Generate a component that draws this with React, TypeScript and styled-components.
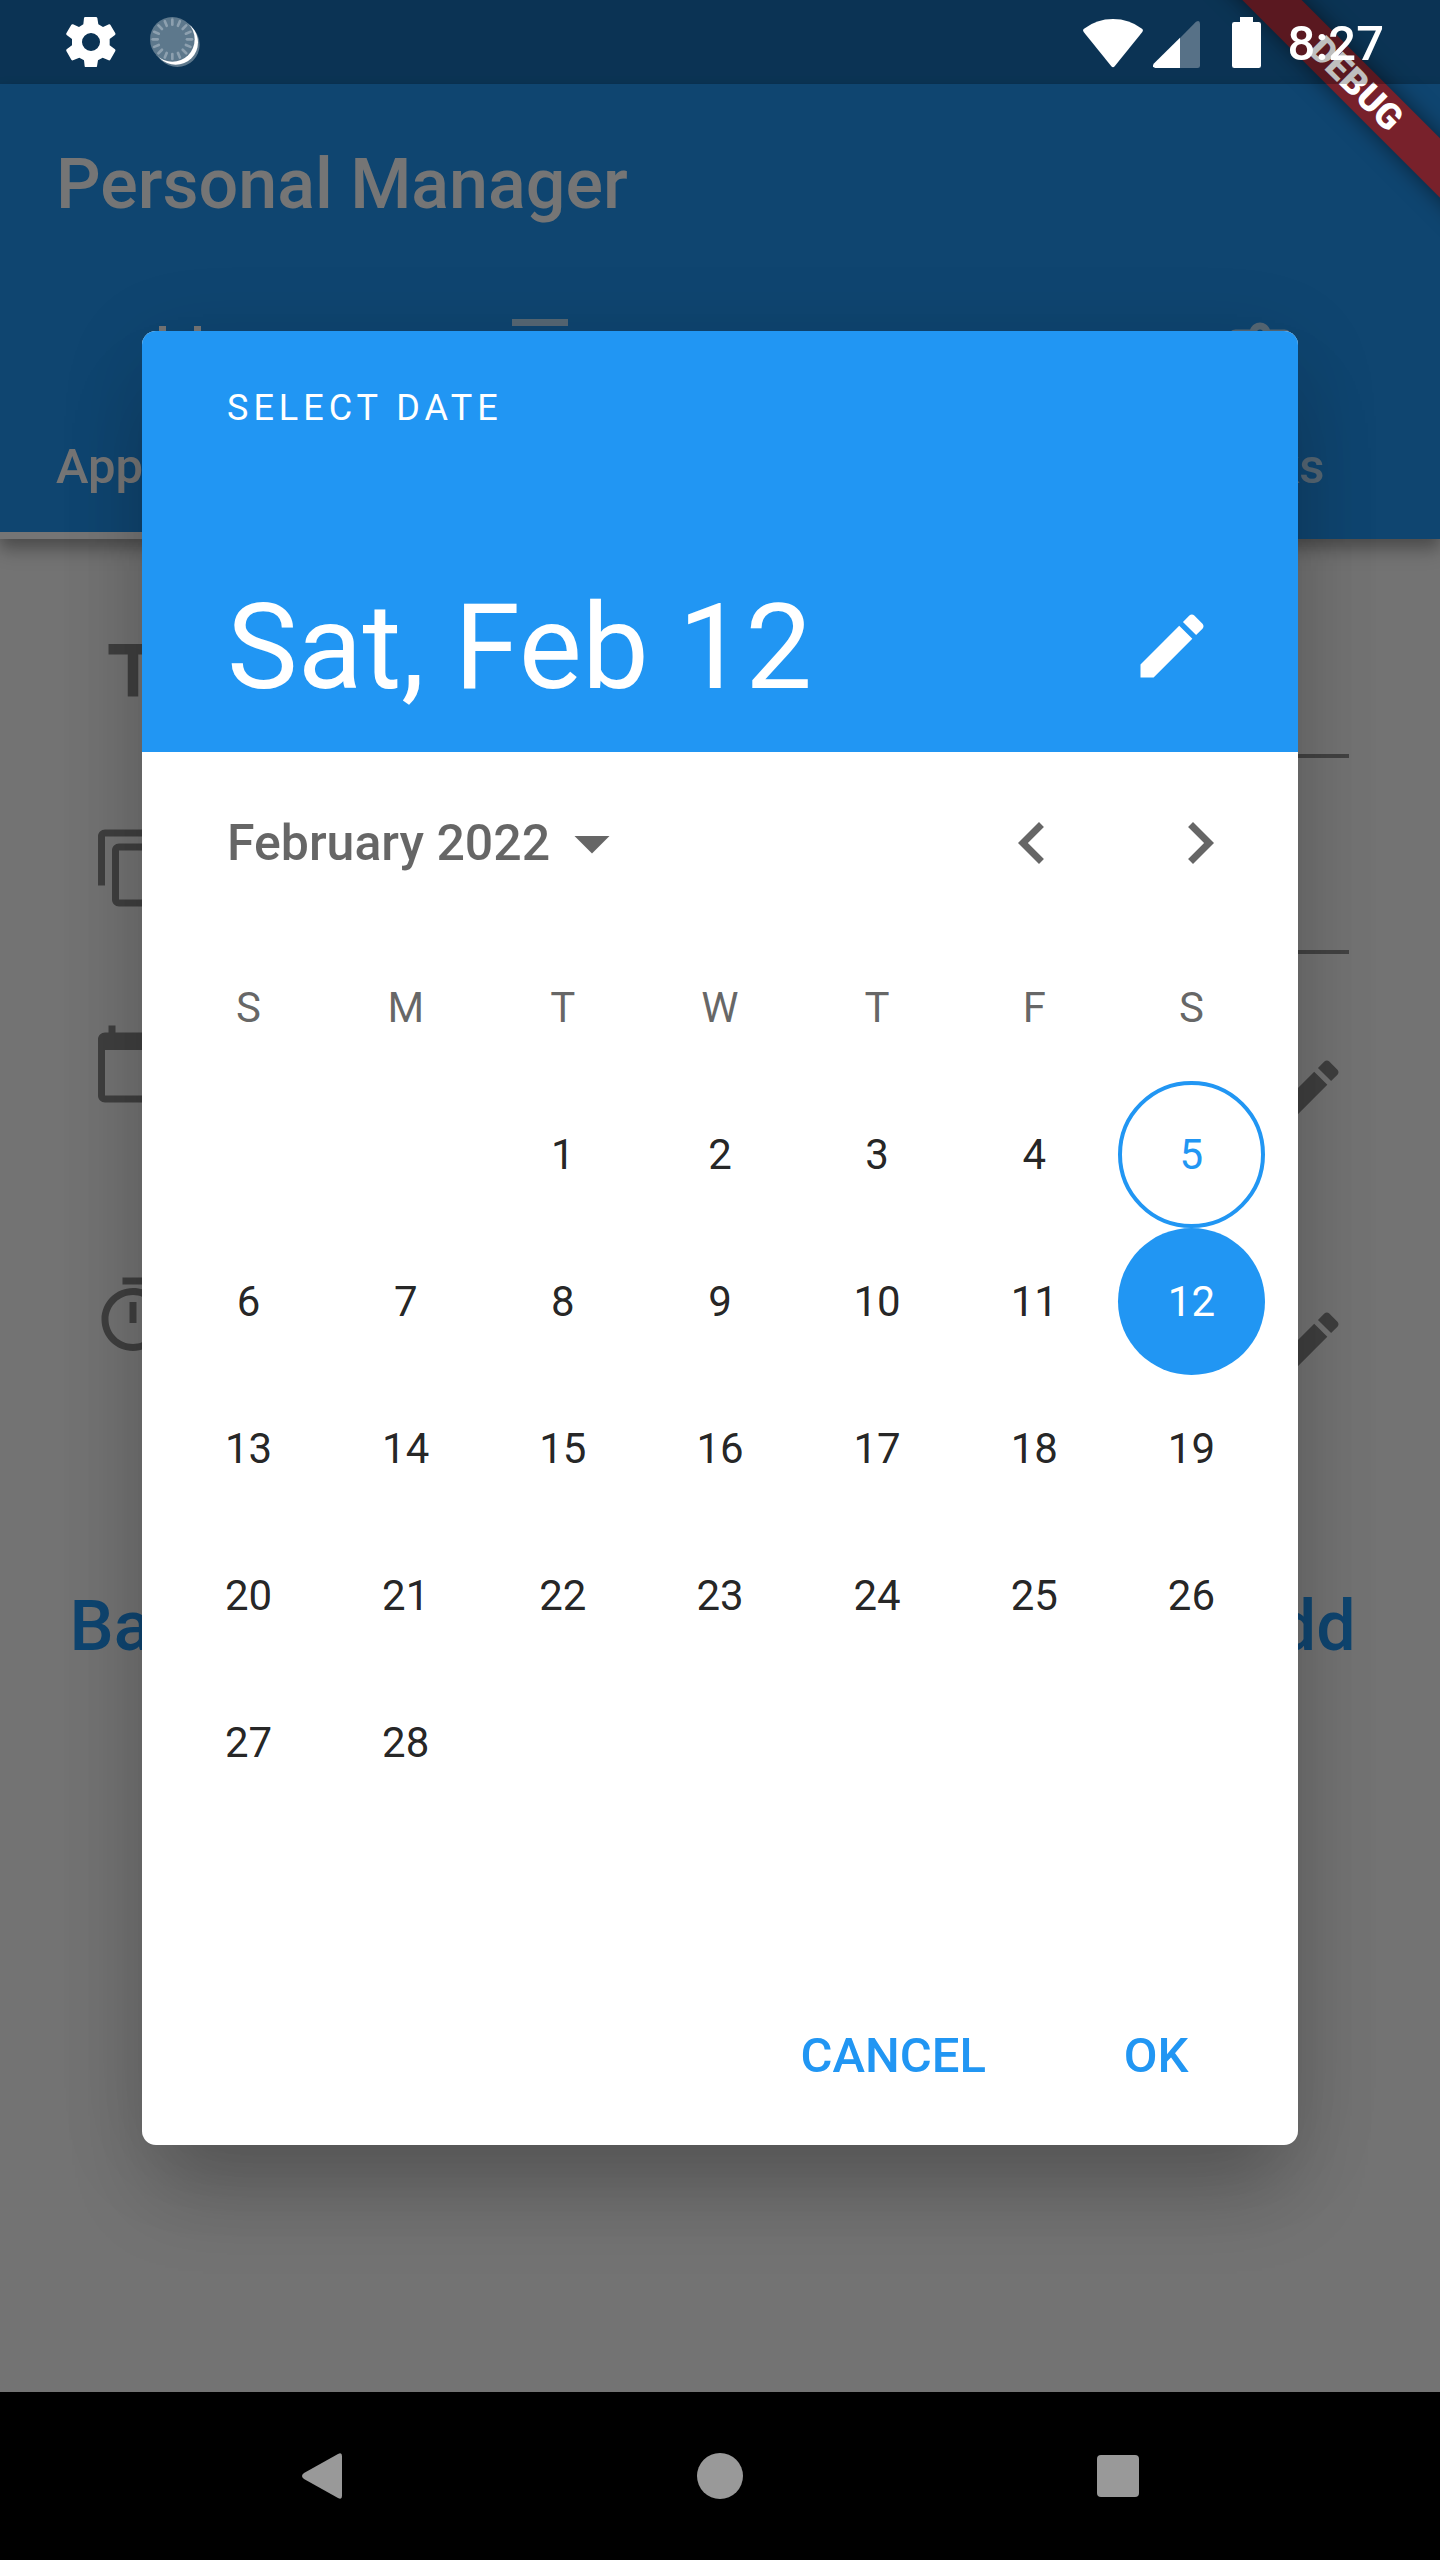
import React, { useState } from "react";
import styled, { createGlobalStyle } from "styled-components";

const BLUE = "#2196f3";
const INK = "rgba(0, 0, 0, 0.87)";
const MUTED = "rgba(0, 0, 0, 0.6)";
const FADED = "rgba(0, 0, 0, 0.45)";

const GlobalStyle = createGlobalStyle`
  *, *::before, *::after { box-sizing: border-box; }
  body {
    margin: 0;
    background: #fafafa;
    font-family: Roboto, "Liberation Sans", sans-serif;
  }
  button {
    margin: 0;
    padding: 0;
    border: 0;
    background: none;
    color: inherit;
    font: inherit;
    cursor: pointer;
  }
  svg { display: block; flex: none; }
`;

const Screen = styled.div`
  position: relative;
  display: flex;
  flex-direction: column;
  min-height: 100vh;
  padding: 84px 0 168px;
  overflow: hidden;
  background: linear-gradient(${BLUE} 84px, #fafafa 84px);
`;

/* ---------- status bar ---------- */

const StatusBar = styled.header`
  position: absolute;
  inset: 0 0 auto;
  z-index: 4;
  display: flex;
  align-items: center;
  justify-content: space-between;
  height: 84px;
  padding: 0 56px 0 66px;
  background: rgba(0, 0, 0, 0.25);
  color: #fff;
`;

const StatusGroup = styled.div<{ $gap: number }>`
  display: flex;
  align-items: center;
  gap: ${(p) => p.$gap}px;
`;

const Signals = styled(StatusGroup)`
  align-items: flex-end;
`;

const Clock = styled.time`
  padding-top: 4px;
  font-size: 49px;
  font-weight: 500;
  line-height: 56px;
`;

/* ---------- app bar ---------- */

const AppBar = styled.div`
  position: relative;
  background: ${BLUE};
  color: #fff;
  box-shadow: 0 7px 14px rgba(0, 0, 0, 0.24), 0 14px 18px rgba(0, 0, 0, 0.14);
`;

const AppTitle = styled.h1`
  margin: 0;
  padding: 4px 56px 0;
  font-size: 70px;
  font-weight: 500;
  line-height: 192px;
`;

const Tabs = styled.nav`
  display: grid;
  grid-template-columns: repeat(4, 1fr);
`;

const Tab = styled.button<{ $active?: boolean }>`
  display: flex;
  flex-direction: column;
  align-items: center;
  gap: 35px;
  min-width: 0;
  padding: 39px 56px 37px;
  border-bottom: 7px solid ${(p) => (p.$active ? "#fff" : "transparent")};
  color: ${(p) => (p.$active ? "#fff" : "rgba(255, 255, 255, 0.7)")};
  font-size: 49px;
  font-weight: 500;
  line-height: 57px;
`;

const TabLabel = styled.span`
  max-width: 100%;
  text-align: left;
  white-space: nowrap;
`;

/* ---------- form behind the dialog ---------- */

const Form = styled.form`
  display: flex;
  flex-direction: column;
  padding: 35px;
  color: ${FADED};
`;

const FieldRow = styled.label`
  display: flex;
  align-items: center;
  gap: 112px;
  height: 196px;
  padding: 0 56px;
`;

const Field = styled.input`
  flex: 1;
  min-width: 0;
  height: 172px;
  padding: 0;
  border: 0;
  border-bottom: 4px solid rgba(0, 0, 0, 0.42);
  background: none;
  color: ${INK};
  font: 400 56px/64px Roboto, sans-serif;
`;

const PickerRow = styled.div`
  display: flex;
  align-items: flex-start;
  justify-content: space-between;
  height: 252px;
  padding: 56px 56px 0;
`;

const PickerEdit = styled.button`
  padding-top: 28px;
`;

const FormActions = styled.div`
  display: flex;
  justify-content: space-between;
  padding-top: 70px;
`;

const FormButton = styled.button`
  min-width: 224px;
  height: 168px;
  padding-top: 4px;
  color: ${BLUE};
  font-size: 70px;
  font-weight: 500;
`;

/* ---------- dialog ---------- */

const Scrim = styled.div`
  position: absolute;
  inset: 0;
  z-index: 2;
  display: flex;
  align-items: center;
  justify-content: center;
  padding: 84px 35px 168px;
  background: rgba(0, 0, 0, 0.54);
`;

const Dialog = styled.section`
  width: 100%;
  max-width: 1156px;
  overflow: hidden;
  border-radius: 14px;
  background: #fff;
  color: ${INK};
  box-shadow: 0 56px 80px -14px rgba(0, 0, 0, 0.22), 0 14px 90px rgba(0, 0, 0, 0.1);
`;

const DialogHeader = styled.div`
  display: flex;
  flex-direction: column;
  justify-content: space-between;
  height: 421px;
  padding: 56px 42px 22px 85px;
  background: ${BLUE};
  color: #fff;
`;

const Overline = styled.p`
  margin: 0;
  font-size: 36px;
  line-height: 42px;
  letter-spacing: 5px;
`;

const DateRow = styled.div`
  display: flex;
  align-items: center;
  justify-content: space-between;
`;

const DateHeadline = styled.h2`
  margin: 0;
  padding-top: 4px;
  font-size: 119px;
  font-weight: 400;
  line-height: 140px;
`;

const IconButton = styled.button`
  display: grid;
  place-items: center;
  width: 168px;
  height: 168px;
`;

const MonthBar = styled.div`
  display: flex;
  align-items: center;
  height: 182px;
  padding: 0 14px 0 85px;
  color: ${MUTED};
`;

const MonthButton = styled.button`
  display: flex;
  align-items: center;
  margin-right: auto;
  font-size: 50px;
  font-weight: 500;
  line-height: 58px;
`;

const Calendar = styled.table`
  width: calc(100% - 56px);
  margin: 0 28px 147px;
  border-collapse: collapse;
  table-layout: fixed;
  font-size: 42px;
  line-height: 49px;
  text-align: center;

  th, td {
    height: 147px;
    padding: 0;
    font-weight: 400;
    vertical-align: middle;
  }
  th { color: ${MUTED}; }
`;

const Day = styled.button<{ $today: boolean; $selected: boolean }>`
  display: block;
  width: 147px;
  height: 147px;
  margin: 0 auto;
  border: ${(p) => (p.$today && !p.$selected ? `4px solid ${BLUE}` : "0")};
  border-radius: 50%;
  background: ${(p) => (p.$selected ? BLUE : "transparent")};
  color: ${(p) => (p.$selected ? "#fff" : p.$today ? BLUE : INK)};
`;

const DialogActions = styled.div`
  display: flex;
  align-items: center;
  justify-content: flex-end;
  gap: 30px;
  height: 182px;
  padding: 0 30px;
`;

const TextButton = styled.button`
  min-width: 224px;
  height: 126px;
  padding: 2px 28px 0;
  color: ${BLUE};
  font-size: 49px;
  font-weight: 500;
`;

/* ---------- debug ribbon ---------- */

const RibbonCorner = styled.div`
  position: absolute;
  top: 0;
  right: 0;
  z-index: 3;
  width: 260px;
  height: 260px;
  overflow: hidden;
  pointer-events: none;
`;

const Ribbon = styled.div`
  position: absolute;
  top: 63px;
  right: -116px;
  width: 400px;
  height: 42px;
  transform: rotate(45deg);
  background: #78212b;
  box-shadow: 0 0 21px rgba(0, 0, 0, 0.5);
  color: #fff;
  font-size: 36px;
  font-weight: 900;
  line-height: 42px;
  text-align: center;
`;

/* ---------- navigation bar ---------- */

const NavBar = styled.footer`
  position: absolute;
  inset: auto 0 0;
  z-index: 4;
  display: grid;
  grid-template-columns: repeat(3, 1fr);
  height: 168px;
  padding: 0 123px;
  background: #000;
  color: #999;
`;

const NavButton = styled.button`
  display: grid;
  place-items: center;
`;

/* ---------- icons ---------- */

const paths = {
  edit: "M3 17.25V21h3.75L17.81 9.94l-3.75-3.75L3 17.25zM20.71 7.04c.39-.39.39-1.02 0-1.41l-2.34-2.34c-.39-.39-1.02-.39-1.41 0l-1.83 1.83 3.75 3.75 1.83-1.83z",
  left: "M15.41 7.41L14 6l-6 6 6 6 1.41-1.41L10.83 12z",
  right: "M10 6L8.59 7.41 13.17 12l-4.58 4.59L10 18l6-6z",
  down: "M7 10l5 5 5-5z",
  dateRange:
    "M9 11H7v2h2v-2zm4 0h-2v2h2v-2zm4 0h-2v2h2v-2zm2-7h-1V2h-2v2H8V2H6v2H5c-1.11 0-1.99.9-1.99 2L3 20c0 1.1.89 2 2 2h14c1.1 0 2-.9 2-2V6c0-1.1-.9-2-2-2zm0 16H5V9h14v11z",
  contacts:
    "M20 0H4v2h16V0zM4 24h16v-2H4v2zM20 4H4c-1.1 0-2 .9-2 2v12c0 1.1.9 2 2 2h16c1.1 0 2-.9 2-2V6c0-1.1-.9-2-2-2zm-8 2.75c1.24 0 2.25 1.01 2.25 2.25s-1.01 2.25-2.25 2.25S9.75 10.24 9.75 9 10.76 6.75 12 6.75zM17 17H7v-1.5c0-1.67 3.33-2.5 5-2.5s5 .83 5 2.5V17z",
  note: "M22 10l-6-6H4c-1.1 0-2 .9-2 2v12.01c0 1.1.9 1.99 2 1.99l16-.01c1.1 0 2-.89 2-1.99v-8zm-7-4.5l5.5 5.5H15V5.5z",
  task: "M19 3h-4.18C14.4 1.84 13.3 1 12 1s-2.4.84-2.82 2H5c-1.1 0-2 .9-2 2v14c0 1.1.9 2 2 2h14c1.1 0 2-.9 2-2V5c0-1.1-.9-2-2-2zm-7 0c.55 0 1 .45 1 1s-.45 1-1 1-1-.45-1-1 .45-1 1-1zm-2 14l-4-4 1.41-1.41L10 14.17l6.59-6.59L18 9l-8 8z",
  title: "M5 4v3h5.5v12h3V7H19V4z",
  copy: "M16 1H4c-1.1 0-2 .9-2 2v14h2V3h12V1zm3 4H8c-1.1 0-2 .9-2 2v14c0 1.1.9 2 2 2h11c1.1 0 2-.9 2-2V7c0-1.1-.9-2-2-2zm0 16H8V7h11v14z",
  today:
    "M20 3h-1V1h-2v2H7V1H5v2H4c-1.1 0-2 .9-2 2v16c0 1.1.9 2 2 2h16c1.1 0 2-.9 2-2V5c0-1.1-.9-2-2-2zm0 18H4V8h16v13z",
  timer:
    "M15 1H9v2h6V1zm-4 13h2V8h-2v6zm8.03-6.61l1.42-1.42c-.43-.51-.9-.99-1.41-1.41l-1.42 1.42C16.07 4.74 14.12 4 12 4c-4.97 0-9 4.03-9 9s4.02 9 9 9 9-4.03 9-9c0-2.12-.74-4.07-1.97-5.61zM12 20c-3.87 0-7-3.13-7-7s3.13-7 7-7 7 3.13 7 7-3.13 7-7 7z",
};

const Icon = ({ name }: { name: keyof typeof paths }) => (
  <svg width="84" height="84" viewBox="0 0 24 24" fill="currentColor" aria-hidden="true">
    <path d={paths[name]} />
  </svg>
);

const GearIcon = () => (
  <svg width="50" height="50" viewBox="198 51 150 150" fill="#fff" aria-hidden="true">
    <path
      fillRule="evenodd"
      d="M258 51h30q3 0 4 3l3 19 14 8 18-8q3-1 4 1l15 26q1 3-1 5l-16 12v19l16 12q2 2 1 5l-15 26q-2 3-5 2l-18-8-14 8-3 18q-1 3-4 3h-29q-3 0-4-3l-2-18-14-8-19 8q-3 1-5-2l-15-26q-1-3 1-5l16-12v-19l-16-12q-2-2-1-5l15-26q2-2 5-1l18 8 13-8 2-19q1-3 3-3zM273 99a27 27 0 1 0 0 54a27 27 0 1 0 0-54z"
    />
  </svg>
);

const BusyIcon = () => (
  <svg width="50" height="50" viewBox="450 51 150 150" aria-hidden="true">
    <g fill="#5d788c">
      <circle cx="532" cy="134" r="67" />
      <path d="M564 71l16 16-95 95-16-16z" />
    </g>
    <circle cx="527" cy="127" r="67" fill="#fff" />
    <circle cx="517" cy="118" r="67" fill="#5d788c" />
    <g stroke="#8da0af" strokeWidth="8" strokeLinecap="round">
      {Array.from({ length: 16 }, (_, i) => (
        <path key={i} d="M517 59v15" transform={`rotate(${i * 22.5} 517 118)`} />
      ))}
    </g>
  </svg>
);

const WifiIcon = () => (
  <svg width="60" height="49" viewBox="126 51 180 147" fill="#fff" aria-hidden="true">
    <path d="M129 80Q167 51 216 51T303 80Q308 84 304 90L221 193Q216 199 211 193L128 90Q124 84 129 80z" />
  </svg>
);

const CellIcon = () => (
  <svg width="47" height="47" viewBox="336 60 141 141" aria-hidden="true">
    <path d="M417 111L465 62Q477 56 477 68V194Q477 201 470 201H417z" fill="#577187" />
    <path d="M417 110V201H343Q332 199 338 188z" fill="#fff" />
  </svg>
);

const BatteryIcon = () => (
  <svg width="29" height="51" viewBox="573 48 87 153" fill="#fff" aria-hidden="true">
    <path d="M597 48h39v15h17q7 0 7 7v124q0 7-7 7h-73q-7 0-7-7V70q0-7 7-7h17z" />
  </svg>
);

/* ---------- data ---------- */

const tabs: { label: string; icon: keyof typeof paths }[] = [
  { label: "Appointments", icon: "dateRange" },
  { label: "Contacts", icon: "contacts" },
  { label: "Notes", icon: "note" },
  { label: "Tasks", icon: "task" },
];

const weekdays = ["S", "M", "T", "W", "T", "F", "S"];
const FIRST_WEEKDAY = 2;
const DAYS = 28;
const TODAY = 5;

const weeks = Array.from({ length: 5 }, (_, w) =>
  Array.from({ length: 7 }, (_, d) => {
    const day = w * 7 + d - FIRST_WEEKDAY + 1;
    return day >= 1 && day <= DAYS ? day : null;
  })
);

const shortNames = ["Sun", "Mon", "Tue", "Wed", "Thu", "Fri", "Sat"];

export default function App() {
  const [selected, setSelected] = useState(12);
  const weekday = shortNames[(selected - 1 + FIRST_WEEKDAY) % 7];

  return (
    <>
      <GlobalStyle />
      <Screen>
        <AppBar>
          <AppTitle>Personal Manager</AppTitle>
          <Tabs>
            {tabs.map((tab, i) => (
              <Tab key={tab.label} type="button" $active={i === 0}>
                <Icon name={tab.icon} />
                <TabLabel>{tab.label}</TabLabel>
              </Tab>
            ))}
          </Tabs>
        </AppBar>

        <Form>
          <FieldRow>
            <Icon name="title" />
            <Field type="text" aria-label="Title" />
          </FieldRow>
          <FieldRow>
            <Icon name="copy" />
            <Field type="text" aria-label="Description" />
          </FieldRow>
          <PickerRow>
            <Icon name="today" />
            <PickerEdit type="button" aria-label="Edit date">
              <Icon name="edit" />
            </PickerEdit>
          </PickerRow>
          <PickerRow>
            <Icon name="timer" />
            <PickerEdit type="button" aria-label="Edit time">
              <Icon name="edit" />
            </PickerEdit>
          </PickerRow>
          <FormActions>
            <FormButton type="button">Back</FormButton>
            <FormButton type="button">Add</FormButton>
          </FormActions>
        </Form>

        <Scrim>
          <Dialog role="dialog" aria-modal="true" aria-label="Select date">
            <DialogHeader>
              <Overline>SELECT DATE</Overline>
              <DateRow>
                <DateHeadline>
                  {weekday}, Feb {selected}
                </DateHeadline>
                <IconButton type="button" aria-label="Enter date">
                  <Icon name="edit" />
                </IconButton>
              </DateRow>
            </DialogHeader>

            <MonthBar>
              <MonthButton type="button">
                February 2022
                <Icon name="down" />
              </MonthButton>
              <IconButton type="button" aria-label="Previous month">
                <Icon name="left" />
              </IconButton>
              <IconButton type="button" aria-label="Next month">
                <Icon name="right" />
              </IconButton>
            </MonthBar>

            <Calendar>
              <thead>
                <tr>
                  {weekdays.map((name, i) => (
                    <th key={i} scope="col">
                      {name}
                    </th>
                  ))}
                </tr>
              </thead>
              <tbody>
                {weeks.map((week, w) => (
                  <tr key={w}>
                    {week.map((day, d) => (
                      <td key={d}>
                        {day && (
                          <Day
                            type="button"
                            $today={day === TODAY}
                            $selected={day === selected}
                            onClick={() => setSelected(day)}
                          >
                            {day}
                          </Day>
                        )}
                      </td>
                    ))}
                  </tr>
                ))}
              </tbody>
            </Calendar>

            <DialogActions>
              <TextButton type="button">CANCEL</TextButton>
              <TextButton type="button">OK</TextButton>
            </DialogActions>
          </Dialog>
        </Scrim>

        <RibbonCorner>
          <Ribbon>DEBUG</Ribbon>
        </RibbonCorner>

        <StatusBar>
          <StatusGroup $gap={34}>
            <GearIcon />
            <BusyIcon />
          </StatusGroup>
          <StatusGroup $gap={27}>
            <Signals $gap={32}>
              <Signals $gap={10}>
                <WifiIcon />
                <CellIcon />
              </Signals>
              <BatteryIcon />
            </Signals>
            <Clock>8:27</Clock>
          </StatusGroup>
        </StatusBar>

        <NavBar>
          <NavButton type="button" aria-label="Back">
            <svg width="42" height="48" viewBox="0 0 42 48" fill="currentColor" aria-hidden="true">
              <path d="M37 2Q41 0 41 4V44Q41 48 37 46L3 27Q-1 24 3 21z" />
            </svg>
          </NavButton>
          <NavButton type="button" aria-label="Home">
            <svg width="48" height="48" viewBox="0 0 48 48" fill="currentColor" aria-hidden="true">
              <circle cx="24" cy="24" r="23" />
            </svg>
          </NavButton>
          <NavButton type="button" aria-label="Recent apps">
            <svg width="42" height="42" viewBox="0 0 42 42" fill="currentColor" aria-hidden="true">
              <rect width="42" height="42" rx="4" />
            </svg>
          </NavButton>
        </NavBar>
      </Screen>
    </>
  );
}
